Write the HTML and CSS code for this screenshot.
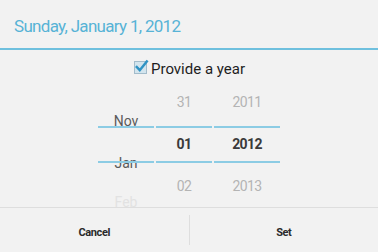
FILE: index.html
```html
<!DOCTYPE html>
<html>
<head>
<meta charset="utf-8">
<link rel="stylesheet" href="styles.css">
</head>
<body>
<div class="dialog">
  <div class="header">Sunday, January 1, 2012</div>
  <div class="year-toggle">
    <svg class="check" width="16" height="16" viewBox="0 0 16 16">
      <rect x="1.5" y="2.5" width="12" height="12" fill="#d3e5ee" stroke="#a3bccb" stroke-width="1"/>
      <path d="M3.8 8 L6.8 11.2 L13.8 2.5" fill="none" stroke="#2f93c4" stroke-width="2.5" stroke-linecap="square"/>
    </svg>
    <span class="toggle-label">Provide a year</span>
  </div>
  <div class="picker">
    <div class="col col-month">
      <div class="item dim">Nov</div>
      <div class="item dim">Jan</div>
      <div class="item faint">Feb</div>
    </div>
    <div class="col col-day">
      <div class="item light">31</div>
      <div class="item current">01</div>
      <div class="item light">02</div>
    </div>
    <div class="col col-year">
      <div class="item light">2011</div>
      <div class="item current">2012</div>
      <div class="item light">2013</div>
    </div>
  </div>
  <div class="buttons">
    <div class="btn">Cancel</div>
    <div class="btn-sep"></div>
    <div class="btn">Set</div>
  </div>
</div>
</body>
</html>
```
FILE: styles.css
```css
html, body {
  margin: 0;
  padding: 0;
  background: #f2f2f2;
}
.dialog {
  width: 378px;
  height: 252px;
  display: flex;
  flex-direction: column;
  font-family: Roboto, "Noto Sans", sans-serif;
  overflow: hidden;
}
.header {
  height: 50px;
  flex: none;
  box-sizing: border-box;
  padding: 16px 0 0 14px;
  font-size: 17px;
  letter-spacing: -0.7px;
  color: #57b3d6;
  border-bottom: 2px solid #6fc0de;
  line-height: 20px;
}
.year-toggle {
  height: 31px;
  flex: none;
  box-sizing: border-box;
  padding-top: 7px;
  display: flex;
  justify-content: center;
  align-items: center;
  gap: 2px;
}
.year-toggle .check {
  display: block;
  margin-top: -4px;
}
.toggle-label {
  font-size: 15px;
  color: #1e1e1e;
  line-height: 20px;
}
.picker {
  height: 126px;
  flex: none;
  display: flex;
  justify-content: center;
  gap: 2px;
}
.col {
  position: relative;
  width: 56px;
  height: 126px;
}
.col-year {
  width: 66px;
}
.col::before,
.col::after {
  content: "";
  position: absolute;
  left: 0;
  right: 0;
  height: 2px;
  background: #8ccce4;
}
.col::before { top: 45px; }
.col::after { top: 80px; }
.col-month {
  box-sizing: border-box;
  padding-top: 19px;
}
.item {
  height: 42px;
  line-height: 42px;
  text-align: center;
  font-size: 14px;
  letter-spacing: -0.6px;
}
.item.light { color: #b4b4b4; }
.item.current { color: #3a3a3a; font-weight: bold; }
.item.dim { color: #5a5a5a; letter-spacing: 0; }
.item.faint { color: #e2e2e2; letter-spacing: 0; height: 22px; line-height: 36px; }
.buttons {
  flex: 1;
  display: flex;
  align-items: center;
  box-sizing: border-box;
  padding-top: 4px;
  border-top: 1px solid #dedede;
}
.btn {
  flex: 1;
  text-align: center;
  font-size: 11px;
  font-weight: bold;
  letter-spacing: -0.4px;
  color: #2a2a2a;
}
.btn-sep {
  width: 1px;
  height: 30px;
  margin-top: -4px;
  background: #dedede;
}
```
